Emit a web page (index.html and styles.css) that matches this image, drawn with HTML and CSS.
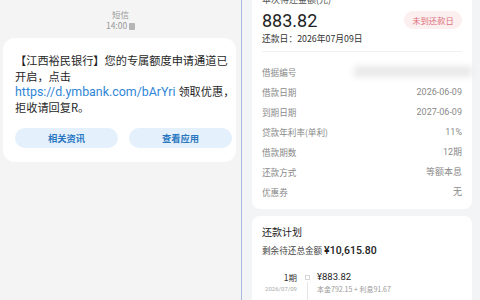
FILE: index.html
```
<!DOCTYPE html>
<html>
  <head>
    <meta charset="UTF-8">
    <title>短信与还款详情</title>
    <link rel="stylesheet" href="styles.css">
  </head>
  <body>
    <div class="screen">
      <div class="sms-pane">
        <div class="sms-head">
          <div class="sms-title">短信</div>
          <div class="sms-time">14:00 <span class="sim"></span></div>
        </div>
        <div class="sms-card">
          <p class="sms-text">【江西裕民银行】您的专属额度申请通道已开启，点击 <span class="link">https://d.ymbank.com/bArYri</span>领取优惠，拒收请回复R。</p>
          <div class="sms-actions">
            <span class="sms-btn">相关资讯</span>
            <span class="sms-btn">查看应用</span>
          </div>
        </div>
      </div>

      <div class="loan-pane">
        <div class="card card-top">
          <div class="due-label">本次待还金额(元)</div>
          <div class="due-row">
            <span class="due-amount">883.82</span>
            <span class="badge">未到还款日</span>
          </div>
          <div class="due-date">还款日：2026年07月09日</div>
          <div class="divider"></div>
          <div class="info-row"><span>借据编号</span><span class="blurred"></span></div>
          <div class="info-row"><span>借款日期</span><span>2026-06-09</span></div>
          <div class="info-row"><span>到期日期</span><span>2027-06-09</span></div>
          <div class="info-row"><span>贷款年利率(单利)</span><span>11%</span></div>
          <div class="info-row"><span>借款期数</span><span>12期</span></div>
          <div class="info-row"><span>还款方式</span><span>等额本息</span></div>
          <div class="info-row"><span>优惠券</span><span>无</span></div>
        </div>

        <div class="card card-plan">
          <div class="plan-title">还款计划</div>
          <div class="plan-total">剩余待还总金额 <span class="plan-sum">¥10,615.80</span></div>
          <div class="plan-item">
            <div class="plan-when">
              <div class="plan-no">1期</div>
              <div class="plan-date">2026/07/09</div>
            </div>
            <div class="plan-axis"><span class="plan-dot"></span></div>
            <div class="plan-what">
              <div class="plan-amount">¥883.82</div>
              <div class="plan-detail">本金792.15 + 利息91.67</div>
            </div>
          </div>
        </div>
      </div>
    </div>
  </body>
</html>
```

FILE: styles.css
```
body {
  margin: 0;
  font-family: "Noto Sans CJK SC", "Noto Sans", sans-serif;
  color: #222;
}

.screen {
  display: flex;
  width: 480px;
  height: 300px;
  overflow: hidden;
}

/* left: sms */

.sms-pane {
  width: 241px;
  background-color: #f4f4f4;
  border-right: 1px solid #a9b9e6;
}

.sms-head {
  padding-top: 9px;
  text-align: center;
  color: #999;
  font-size: 8.5px;
  line-height: 11px;
}

.sim {
  display: inline-block;
  width: 6px;
  height: 7px;
  border-radius: 1px;
  background-color: #b5b5b5;
  vertical-align: -1px;
}

.sms-card {
  margin: 7px 5px 0 3px;
  padding: 15px 0 14px 12px;
  background-color: white;
  border-radius: 12px;
}

.sms-text {
  margin: 0;
  font-size: 11.2px;
  line-height: 15.7px;
  color: #1f1f1f;
}

.link {
  font-family: Roboto, sans-serif;
  font-size: 12.4px;
  line-height: 1;
  margin-right: 3px;
  color: #2f86d6;
  white-space: nowrap;
}

.sms-actions {
  display: flex;
  gap: 11px;
  margin: 12px 4px 0 0;
}

.sms-btn {
  flex: 1;
  height: 20px;
  line-height: 20px;
  border-radius: 10px;
  background-color: #e4f0fb;
  color: #2a78c2;
  font-size: 9.3px;
  font-weight: bold;
  text-align: center;
}

/* right: loan */

.loan-pane {
  flex: 1;
  background-color: #f3f4f6;
  padding: 0 8px 0 10px;
}

.card {
  background-color: white;
  border-radius: 8px;
  padding: 0 10px;
}

.card-top {
  margin-top: -10px;
  padding-top: 4px;
  padding-bottom: 7px;
}

.due-label {
  font-size: 9px;
  line-height: 12px;
  color: #555;
}

.due-row {
  display: flex;
  justify-content: space-between;
  align-items: center;
  height: 22px;
  margin-top: 3px;
}

.due-amount {
  font-family: Roboto, sans-serif;
  font-size: 18px;
  color: #222;
}

.badge {
  width: 58px;
  height: 18px;
  line-height: 18px;
  border-radius: 9px;
  background-color: #fbeff0;
  color: #e0707a;
  font-size: 8.3px;
  text-align: center;
}

.due-date {
  margin-top: 2px;
  font-size: 8.8px;
  line-height: 12px;
  color: #333;
}

.divider {
  height: 1px;
  background-color: #f0f0f0;
  margin: 6px 0 10px;
}

.info-row {
  display: flex;
  justify-content: space-between;
  height: 20px;
  line-height: 20px;
  font-size: 8.6px;
  color: #8a8a8a;
}

.info-row span:last-child {
  font-family: Roboto, "Noto Sans CJK SC", sans-serif;
  font-size: 9px;
}

.blurred {
  width: 118px;
  height: 11px;
  margin: 4px -10px 0 0;
  background-color: #e9e9e9;
  filter: blur(3px);
}

.card-plan {
  margin-top: 7px;
  padding-top: 9px;
  height: 120px;
}

.plan-title {
  font-size: 10px;
  line-height: 14px;
  color: #222;
}

.plan-total {
  margin-top: 4px;
  font-size: 8.6px;
  line-height: 14px;
  color: #444;
}

.plan-sum {
  font-family: Roboto, sans-serif;
  font-size: 10.5px;
  font-weight: 500;
  color: #222;
}

.plan-item {
  display: flex;
  margin-top: 13px;
}

.plan-when {
  width: 35px;
  text-align: right;
}

.plan-no {
  font-size: 8.5px;
  line-height: 12px;
  color: #333;
}

.plan-date {
  font-family: Roboto, sans-serif;
  font-size: 6px;
  line-height: 12px;
  color: #aaa;
  white-space: nowrap;
}

.plan-axis {
  width: 20px;
  display: flex;
  flex-direction: column;
  align-items: center;
  padding-top: 4px;
}

.plan-dot {
  width: 3px;
  height: 3px;
  border: 1px solid #d6d6d6;
}

.plan-axis:after {
  content: '';
  width: 1px;
  height: 30px;
  margin-top: 2px;
  background-color: #e6e6e6;
}

.plan-amount {
  font-family: Roboto, sans-serif;
  font-size: 9.5px;
  line-height: 12px;
  color: #222;
}

.plan-detail {
  font-size: 7px;
  line-height: 12px;
  color: #999;
  white-space: nowrap;
}
```
